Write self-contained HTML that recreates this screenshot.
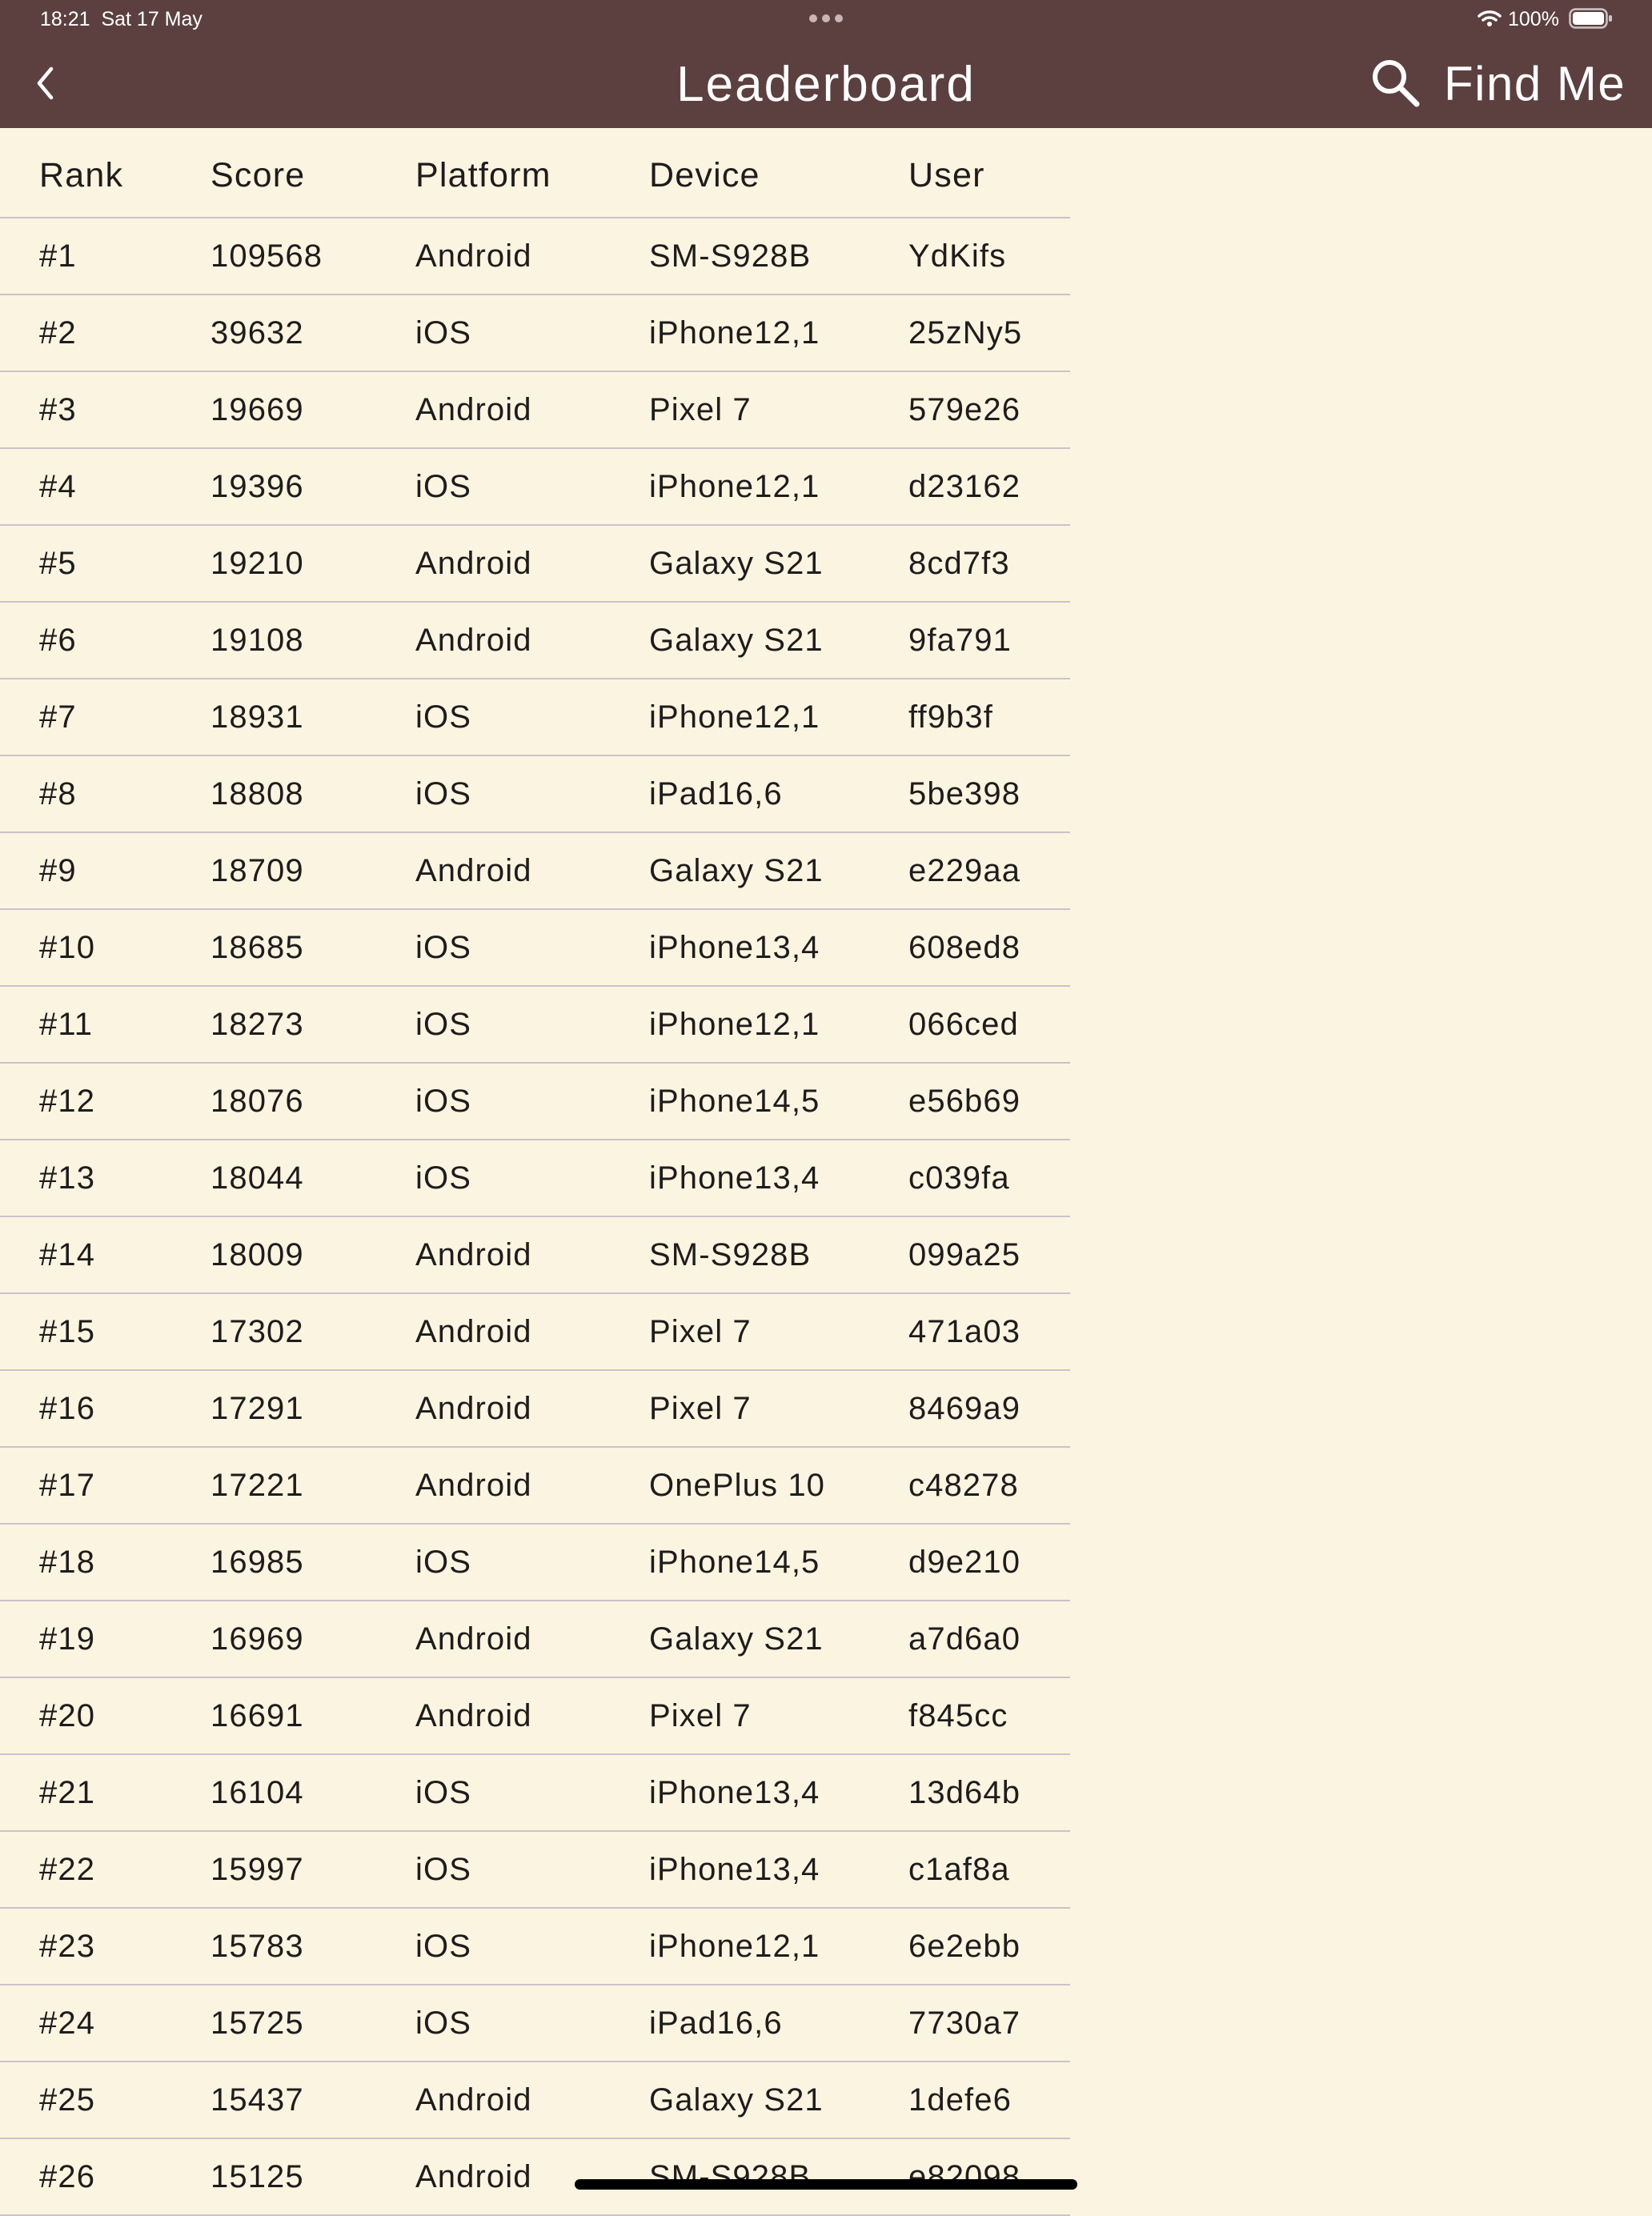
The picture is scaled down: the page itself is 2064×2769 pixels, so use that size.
<!DOCTYPE html>
<html><head><meta charset="utf-8">
<style>
*{margin:0;padding:0;box-sizing:border-box}
body{width:2064px;height:2752px;background:#fbf4e0;font-family:"Liberation Sans",sans-serif;color:#1e1c1c;position:relative;overflow:hidden}
.bar{position:absolute;left:0;top:0;width:2064px;height:160px;background:#5c4040;color:#fff}
.st{position:absolute;top:10px;font-size:25px;color:#fff}
.title{position:absolute;left:0;width:2064px;top:70px;text-align:center;font-size:62px;letter-spacing:2px}
.find{position:absolute;left:1804px;top:70px;font-size:60px;letter-spacing:1.5px}
table{position:absolute;left:0;top:160px;width:1337px;border-collapse:collapse}
td,th{text-align:left;font-weight:normal;padding:0;height:96px;border-bottom:2px solid #cac3cc;font-size:40px;letter-spacing:1.1px;vertical-align:middle}
th{height:112px;font-size:43px;letter-spacing:1.2px;padding-top:8px}
td:nth-child(1),th:nth-child(1){padding-left:49px;width:263px}
td:nth-child(2),th:nth-child(2){width:256px}
td:nth-child(3),th:nth-child(3){width:292px}
td:nth-child(4),th:nth-child(4){width:324px}
.home{position:absolute;left:718px;top:2723px;width:628px;height:13px;border-radius:7px;background:#000}
</style></head><body>
<div class="bar">
<div class="st" style="left:50px">18:21&nbsp;&nbsp;Sat 17 May</div>
<svg style="position:absolute;left:1010px;top:17px" width="44" height="12"><circle cx="6" cy="6" r="5" fill="#c9b5b5"/><circle cx="22" cy="6" r="5" fill="#c9b5b5"/><circle cx="38" cy="6" r="5" fill="#c9b5b5"/></svg>
<svg style="position:absolute;left:1846px;top:12px" width="30" height="22" viewBox="0 0 30 22"><path d="M2 8a19 19 0 0 1 26 0M7 13a12 12 0 0 1 16 0" stroke="#fff" stroke-width="3.5" fill="none" stroke-linecap="round"/><circle cx="15" cy="18" r="3" fill="#fff"/></svg>
<div class="st" style="left:1884px">100%</div>
<svg style="position:absolute;left:1960px;top:10px" width="56" height="26"><rect x="1.5" y="1.5" width="46" height="23" rx="7" fill="none" stroke="#fff" stroke-width="2.5" opacity=".7"/><rect x="5" y="5" width="39" height="16" rx="4" fill="#fff"/><rect x="50" y="9" width="4" height="8" rx="2" fill="#fff" opacity=".7"/></svg>
<svg style="position:absolute;left:44px;top:82px" width="26" height="44"><path d="M20 4L5 22L20 40" stroke="#fff" stroke-width="4.5" fill="none" stroke-linecap="round" stroke-linejoin="round"/></svg>
<div class="title">Leaderboard</div>
<svg style="position:absolute;left:1712px;top:72px" width="64" height="64"><circle cx="24" cy="24" r="18" stroke="#fff" stroke-width="6" fill="none"/><path d="M37 37L58 58" stroke="#fff" stroke-width="7" stroke-linecap="round"/></svg>
<div class="find">Find Me</div>
</div>
<table>
<tr><th>Rank</th><th>Score</th><th>Platform</th><th>Device</th><th>User</th></tr>
<tr><td>#1</td><td>109568</td><td>Android</td><td>SM-S928B</td><td>YdKifs</td></tr>
<tr><td>#2</td><td>39632</td><td>iOS</td><td>iPhone12,1</td><td>25zNy5</td></tr>
<tr><td>#3</td><td>19669</td><td>Android</td><td>Pixel 7</td><td>579e26</td></tr>
<tr><td>#4</td><td>19396</td><td>iOS</td><td>iPhone12,1</td><td>d23162</td></tr>
<tr><td>#5</td><td>19210</td><td>Android</td><td>Galaxy S21</td><td>8cd7f3</td></tr>
<tr><td>#6</td><td>19108</td><td>Android</td><td>Galaxy S21</td><td>9fa791</td></tr>
<tr><td>#7</td><td>18931</td><td>iOS</td><td>iPhone12,1</td><td>ff9b3f</td></tr>
<tr><td>#8</td><td>18808</td><td>iOS</td><td>iPad16,6</td><td>5be398</td></tr>
<tr><td>#9</td><td>18709</td><td>Android</td><td>Galaxy S21</td><td>e229aa</td></tr>
<tr><td>#10</td><td>18685</td><td>iOS</td><td>iPhone13,4</td><td>608ed8</td></tr>
<tr><td>#11</td><td>18273</td><td>iOS</td><td>iPhone12,1</td><td>066ced</td></tr>
<tr><td>#12</td><td>18076</td><td>iOS</td><td>iPhone14,5</td><td>e56b69</td></tr>
<tr><td>#13</td><td>18044</td><td>iOS</td><td>iPhone13,4</td><td>c039fa</td></tr>
<tr><td>#14</td><td>18009</td><td>Android</td><td>SM-S928B</td><td>099a25</td></tr>
<tr><td>#15</td><td>17302</td><td>Android</td><td>Pixel 7</td><td>471a03</td></tr>
<tr><td>#16</td><td>17291</td><td>Android</td><td>Pixel 7</td><td>8469a9</td></tr>
<tr><td>#17</td><td>17221</td><td>Android</td><td>OnePlus 10</td><td>c48278</td></tr>
<tr><td>#18</td><td>16985</td><td>iOS</td><td>iPhone14,5</td><td>d9e210</td></tr>
<tr><td>#19</td><td>16969</td><td>Android</td><td>Galaxy S21</td><td>a7d6a0</td></tr>
<tr><td>#20</td><td>16691</td><td>Android</td><td>Pixel 7</td><td>f845cc</td></tr>
<tr><td>#21</td><td>16104</td><td>iOS</td><td>iPhone13,4</td><td>13d64b</td></tr>
<tr><td>#22</td><td>15997</td><td>iOS</td><td>iPhone13,4</td><td>c1af8a</td></tr>
<tr><td>#23</td><td>15783</td><td>iOS</td><td>iPhone12,1</td><td>6e2ebb</td></tr>
<tr><td>#24</td><td>15725</td><td>iOS</td><td>iPad16,6</td><td>7730a7</td></tr>
<tr><td>#25</td><td>15437</td><td>Android</td><td>Galaxy S21</td><td>1defe6</td></tr>
<tr><td>#26</td><td>15125</td><td>Android</td><td>SM-S928B</td><td>e82098</td></tr>
</table>
<div class="home"></div>
</body></html>
